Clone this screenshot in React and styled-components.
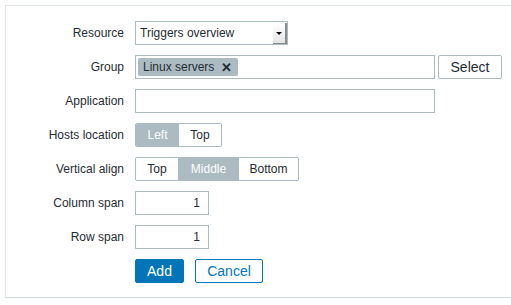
import styled, { createGlobalStyle } from "styled-components";

const GlobalStyle = createGlobalStyle`
  body {
    margin: 0;
    background: #ffffff;
    font-family: "Liberation Sans", Arial, sans-serif;
    color: #1f2c33;
  }
`;

const Panel = styled.div`
  margin: 5px 0 0 5px;
  width: 520px;
  border: 1px solid #dfe4e7;
  border-bottom-color: #d3dde0;
  padding: 15px 0 14px 0;
  display: grid;
  grid-template-columns: 118px 1fr;
  column-gap: 11px;
  row-gap: 10px;
  align-items: center;
`;

const Label = styled.label`
  font-size: 12px;
  text-align: right;
  line-height: 24px;
`;

const Field = styled.div`
  display: flex;
  align-items: center;
  gap: ${({ $gap }) => $gap || 0}px;
  height: 24px;
`;

const SelectBox = styled.div`
  box-sizing: border-box;
  width: 153px;
  height: 24px;
  border: 1px solid #acbbc2;
  display: flex;
  align-items: stretch;
  font-size: 12px;
  background: #fff;
`;

const SelectText = styled.span`
  flex: 1;
  padding-left: 4px;
  line-height: 22px;
`;

const SelectArrow = styled.span`
  width: 12px;
  margin: 1px 0 0 0;
  background: linear-gradient(to bottom, #ffffff, #e4e4e4);
  border-right: 2px solid #8a8a8a;
  border-bottom: 1px solid #8a8a8a;
  display: flex;
  align-items: center;
  justify-content: center;

  &::after {
    content: "";
    border-left: 3px solid transparent;
    border-right: 3px solid transparent;
    border-top: 3px solid #000;
  }
`;

const TextBox = styled.div`
  box-sizing: border-box;
  width: ${({ $w }) => $w}px;
  height: 24px;
  border: 1px solid #acbbc2;
  background: #fff;
  display: flex;
  align-items: center;
  justify-content: ${({ $right }) => ($right ? "flex-end" : "flex-start")};
  padding: 0 ${({ $right }) => ($right ? 8 : 2)}px 0 2px;
  font-size: 12px;
`;

const Tag = styled.span`
  height: 18px;
  display: inline-flex;
  align-items: center;
  gap: 7px;
  padding: 0 6px 0 5px;
  background: #acbbc2;
  border-radius: 2px;
  font-size: 12px;
  color: #1f2c33;
`;

const TagClose = styled.span`
  font-size: 13px;
  font-weight: bold;
  line-height: 1;
`;

const Button = styled.button`
  box-sizing: border-box;
  height: 24px;
  width: ${({ $w }) => $w}px;
  padding: 0;
  border-radius: 2px;
  font-family: "Liberation Sans", Arial, sans-serif;
  font-size: 14px;
  cursor: pointer;
  border: 1px solid ${({ $primary }) => ($primary ? "#0275b8" : "#acbbc2")};
  background: ${({ $primary }) => ($primary ? "#0275b8" : "#fff")};
  color: ${({ $primary }) => ($primary ? "#fff" : "#1f2c33")};
`;

const OutlineButton = styled(Button)`
  border-color: #0275b8;
  color: #0275b8;
`;

const Segmented = styled.div`
  display: flex;
  height: 24px;
  box-sizing: border-box;
  border: 1px solid #acbbc2;
  border-radius: 2px;
  overflow: hidden;
`;

const Segment = styled.span`
  width: ${({ $w }) => $w}px;
  display: flex;
  align-items: center;
  justify-content: center;
  font-size: 12px;
  background: ${({ $active }) => ($active ? "#acbbc2" : "#fff")};
  color: ${({ $active }) => ($active ? "#fff" : "#1f2c33")};
`;

export default function App() {
  return (
    <>
      <GlobalStyle />
      <Panel>
        <Label>Resource</Label>
        <Field>
          <SelectBox>
            <SelectText>Triggers overview</SelectText>
            <SelectArrow />
          </SelectBox>
        </Field>

        <Label>Group</Label>
        <Field $gap={3}>
          <TextBox $w={300}>
            <Tag>
              Linux servers <TagClose>✕</TagClose>
            </Tag>
          </TextBox>
          <Button $w={64}>Select</Button>
        </Field>

        <Label>Application</Label>
        <Field>
          <TextBox $w={300} />
        </Field>

        <Label>Hosts location</Label>
        <Field>
          <Segmented>
            <Segment $w={43} $active>Left</Segment>
            <Segment $w={42}>Top</Segment>
          </Segmented>
        </Field>

        <Label>Vertical align</Label>
        <Field>
          <Segmented>
            <Segment $w={42}>Top</Segment>
            <Segment $w={61} $active>Middle</Segment>
            <Segment $w={59}>Bottom</Segment>
          </Segmented>
        </Field>

        <Label>Column span</Label>
        <Field>
          <TextBox $w={74} $right>1</TextBox>
        </Field>

        <Label>Row span</Label>
        <Field>
          <TextBox $w={74} $right>1</TextBox>
        </Field>

        <span />
        <Field $gap={11}>
          <Button $w={49} $primary>Add</Button>
          <OutlineButton $w={68}>Cancel</OutlineButton>
        </Field>
      </Panel>
    </>
  );
}
